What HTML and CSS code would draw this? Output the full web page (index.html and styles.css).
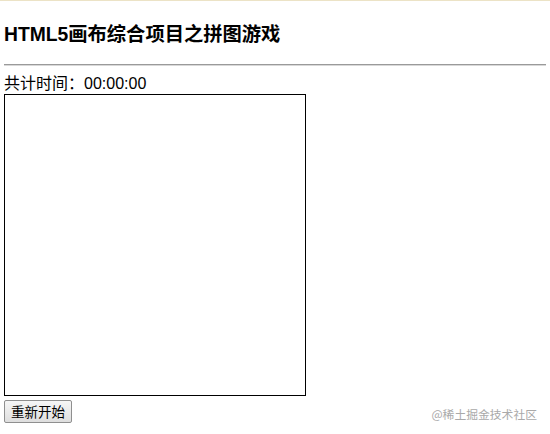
FILE: index.html
```html
<!DOCTYPE html>
<html lang="zh-CN">
<head>
  <meta charset="UTF-8" />
  <meta name="viewport" content="width=device-width, initial-scale=1.0" />
  <title>HTML5画布综合项目之拼图游戏</title>
  <link rel="stylesheet" href="styles.css">
</head>
<body>

  <h3 class="title">HTML5画布综合项目之拼图游戏</h3>
  <hr class="line" />

  <!-- 计时 -->
  <div class="timer">共计时间：<span id="time">00:00:00</span></div>

  <!-- 拼图画布 -->
  <canvas id="puzzle" class="board" width="300" height="300"></canvas>

  <div class="controls">
    <button class="restart" id="restart">重新开始</button>
  </div>

  <div class="watermark">@稀土掘金技术社区</div>

</body>
</html>
```

FILE: styles.css
```css
html {
  border-top: 1px solid #ece3c6;
}

body {
  margin: 4px;
  font-family: 'Liberation Sans', 'Noto Sans CJK SC', sans-serif;
  color: #000;
  background: #fff;
  position: relative;
  min-height: 427px;
}

.title {
  margin: 18px 0 18px;
  font-size: 19.3px;
  line-height: 23px;
  font-weight: bold;
}

.line {
  margin: 0 0 8px;
  border: none;
  border-top: 1px solid #9a9a9a;
  border-bottom: 1px solid #d8d8d8;
}

.timer {
  font-size: 16px;
  line-height: 20px;
}

.board {
  display: block;
  width: 300px;
  height: 300px;
  border: 1px solid #000;
}

.controls {
  margin-top: 4px;
}

.restart {
  font-family: 'Noto Sans CJK SC', sans-serif;
  font-size: 13.5px;
  height: 23px;
  line-height: 19px;
  padding: 1px 6px;
  border: 1px solid #8f8f8f;
  border-radius: 2px;
  background: linear-gradient(#f6f6f6, #dedede);
  color: #000;
}

/* 水印 */
.watermark {
  position: absolute;
  right: 9px;
  bottom: 11px;
  font-family: 'Noto Sans CJK SC', sans-serif;
  font-size: 11.8px;
  line-height: 14px;
  color: #a9a9a9;
}
```
